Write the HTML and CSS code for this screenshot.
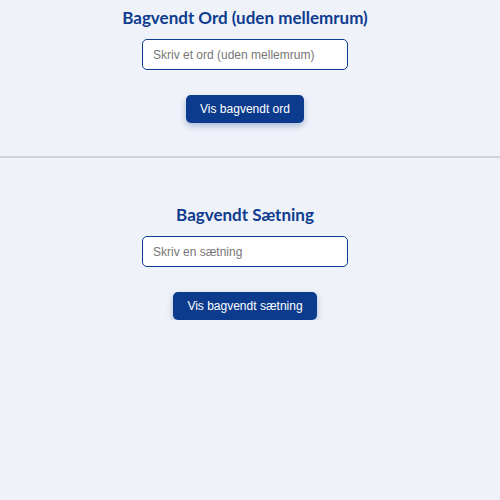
FILE: index.html
```html
<!DOCTYPE html>
<html lang="da">
<head>
    <meta charset="UTF-8">
    <meta name="viewport" content="width=device-width, initial-scale=1.0">
    <title>Bagvendt</title>
    <link rel="stylesheet" href="styles.css">
</head>
<body>
    <div class="section first">
        <h2>Bagvendt Ord (uden mellemrum)</h2>
        <input type="text" class="text-input" placeholder="Skriv et ord (uden mellemrum)">
        <button class="button">Vis bagvendt ord</button>
    </div>

    <hr class="divider">

    <div class="section second">
        <h2>Bagvendt Sætning</h2>
        <input type="text" class="text-input" placeholder="Skriv en sætning">
        <button class="button">Vis bagvendt sætning</button>
    </div>
</body>
</html>
```

FILE: styles.css
```css
body {
    font-family: "Liberation Sans", Arial, sans-serif;
    background-color: #eff2f8;
    margin: 0;
    padding: 0;
}

.section {
    display: flex;
    flex-direction: column;
    align-items: center;
    padding-right: 10px;
}

.section.first {
    padding-top: 8px;
    padding-bottom: 33px;
}

.section.second {
    padding-top: 47px;
}

h2 {
    font-family: Lato, "Open Sans", sans-serif;
    font-size: 17px;
    font-weight: bold;
    color: #0d3c8f;
    line-height: 20px;
    margin: 0 0 11px 0;
}

.text-input {
    box-sizing: border-box;
    width: 206px;
    height: 31px;
    padding: 0 10px;
    border: 1.5px solid #0d3c8f;
    border-radius: 5px;
    background-color: #fff;
    font-family: "Liberation Sans", Arial, sans-serif;
    font-size: 12px;
    color: #333;
}

.text-input::placeholder {
    color: #777;
}

.button {
    margin-top: 25px;
    height: 28px;
    padding: 0 14px;
    background-color: #0c3b8e;
    color: #fff;
    border: none;
    border-radius: 5px;
    font-family: "Liberation Sans", Arial, sans-serif;
    font-size: 12px;
    box-shadow: 0 3px 6px rgba(11, 59, 143, 0.3);
    cursor: pointer;
}

.divider {
    margin: 0;
    border: none;
    border-top: 2px solid #cfd2d6;
}
```
